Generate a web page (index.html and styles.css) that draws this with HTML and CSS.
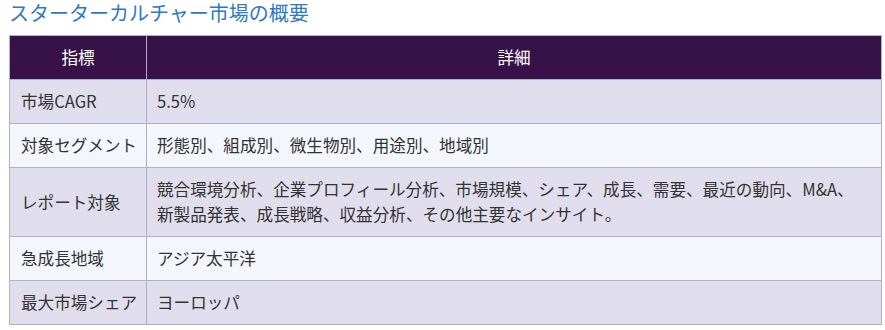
FILE: index.html
```html
<!DOCTYPE html>
<html lang="ja">
<head>
<meta charset="utf-8">
<link rel="stylesheet" href="styles.css">
</head>
<body>
<h2 class="title">スターターカルチャー市場の概要</h2>
<table class="summary">
  <thead>
    <tr><th class="col-key">指標</th><th>詳細</th></tr>
  </thead>
  <tbody>
    <tr><td>市場CAGR</td><td>5.5%</td></tr>
    <tr><td>対象セグメント</td><td>形態別、組成別、微生物別、用途別、地域別</td></tr>
    <tr><td>レポート対象</td><td>競合環境分析、企業プロフィール分析、市場規模、シェア、成長、需要、最近の動向、M&amp;A、<br>新製品発表、成長戦略、収益分析、その他主要なインサイト。</td></tr>
    <tr><td>急成長地域</td><td>アジア太平洋</td></tr>
    <tr><td>最大市場シェア</td><td>ヨーロッパ</td></tr>
  </tbody>
</table>
</body>
</html>
```
FILE: styles.css
```css
html, body {
  margin: 0;
  padding: 0;
  background: #ffffff;
}
body {
  padding: 0 3px 0 9px;
  font-family: "Noto Sans CJK JP", "Noto Sans", sans-serif;
  color: #333333;
}
.title {
  margin: 0 0 9px 0;
  font-size: 20px;
  line-height: 26px;
  font-weight: normal;
  color: #2f78c4;
}
.summary {
  width: 873px;
  border-collapse: collapse;
  table-layout: fixed;
  font-size: 16.6px;
  line-height: 25px;
}
.summary th,
.summary td {
  border: 1px solid #b4adcb;
  padding: 9px 10px;
  text-align: left;
  vertical-align: middle;
}
.summary th {
  background: #371249;
  color: #ffffff;
  font-weight: normal;
  text-align: center;
}
.summary .col-key {
  width: 116px;
}
.summary tbody tr:nth-child(odd) td {
  background: #e0ddec;
}
.summary tbody tr:nth-child(even) td {
  background: #f3f7fc;
}
.summary td:first-child {
  padding: 9px 4px 9px 11px;
  white-space: nowrap;
}
```
